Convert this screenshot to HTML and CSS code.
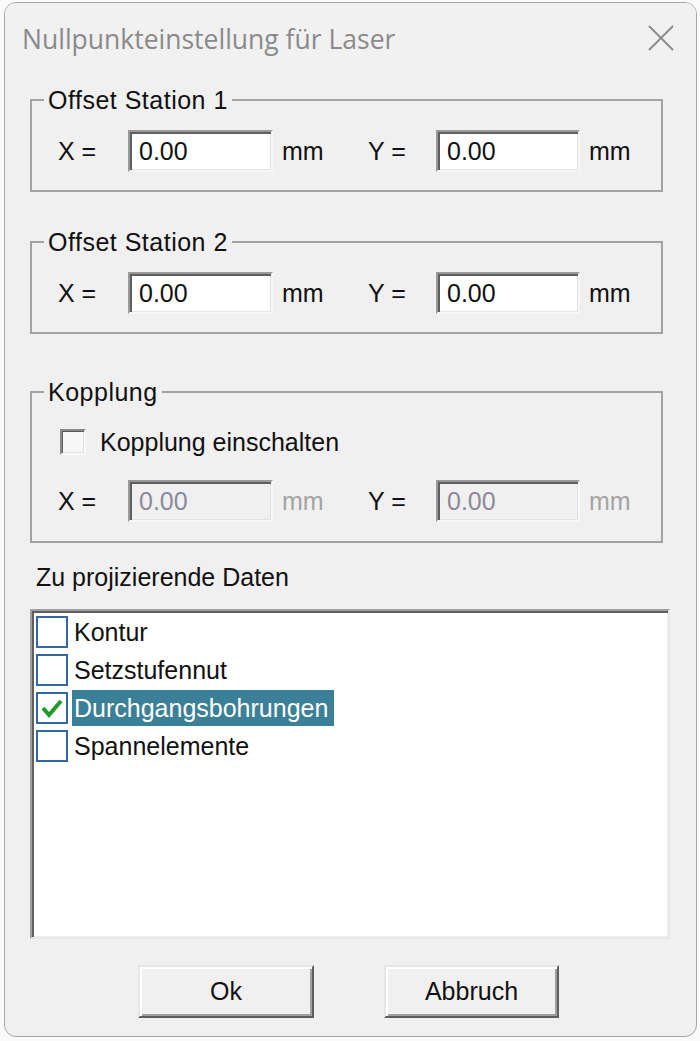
FILE: index.html
```html
<!DOCTYPE html>
<html lang="de">
<head>
<meta charset="utf-8">
<title>Nullpunkteinstellung für Laser</title>
<link rel="stylesheet" href="styles.css">
</head>
<body>
<div class="window">
  <div class="titlebar">
    <span class="title">Nullpunkteinstellung für Laser</span>
    <svg class="close" width="26" height="26" viewBox="0 0 26 26"><path d="M1 1 L25 25 M25 1 L1 25" stroke="#8a8a8a" stroke-width="1.8" fill="none"/></svg>
  </div>

  <fieldset class="group g1">
    <legend>Offset Station 1</legend>
    <div class="row">
      <span class="lbl">X =</span><div class="edit">0.00</div><span class="unit">mm</span>
      <span class="lbl lbl-y">Y =</span><div class="edit edit-y">0.00</div><span class="unit">mm</span>
    </div>
  </fieldset>

  <fieldset class="group g2">
    <legend>Offset Station 2</legend>
    <div class="row">
      <span class="lbl">X =</span><div class="edit">0.00</div><span class="unit">mm</span>
      <span class="lbl lbl-y">Y =</span><div class="edit edit-y">0.00</div><span class="unit">mm</span>
    </div>
  </fieldset>

  <fieldset class="group g3">
    <legend>Kopplung</legend>
    <div class="checkrow">
      <span class="check3d"></span><span class="checklbl">Kopplung einschalten</span>
    </div>
    <div class="row row-dis">
      <span class="lbl">X =</span><div class="edit disabled">0.00</div><span class="unit unit-dis">mm</span>
      <span class="lbl lbl-y">Y =</span><div class="edit edit-y disabled">0.00</div><span class="unit unit-dis">mm</span>
    </div>
  </fieldset>

  <div class="listcaption">Zu projizierende Daten</div>

  <div class="listbox">
    <div class="item"><span class="cb"></span><span class="itext">Kontur</span></div>
    <div class="item"><span class="cb"></span><span class="itext">Setzstufennut</span></div>
    <div class="item"><span class="cb"><svg width="28" height="28" viewBox="0 0 28 28"><path d="M5 14 L11 21 L23 7" stroke="#1f9b2a" stroke-width="4" fill="none"/></svg></span><span class="itext sel">Durchgangsbohrungen</span></div>
    <div class="item"><span class="cb"></span><span class="itext">Spannelemente</span></div>
  </div>

  <div class="buttons">
    <div class="btn btn-ok">Ok</div>
    <div class="btn btn-cancel">Abbruch</div>
  </div>
</div>
</body>
</html>
```

FILE: styles.css
```css
html, body {
  margin: 0;
  padding: 0;
}
body {
  width: 700px;
  height: 1041px;
  background: #fafafa;
  overflow: hidden;
  font-family: "Liberation Sans", Arial, sans-serif;
  font-size: 25px;
  color: #111;
}
.window {
  margin: 2px 3px 0 4px;
  height: 1035px;
  box-sizing: border-box;
  border: 1px solid #a8a8a8;
  border-radius: 12px;
  background: #f0f0f0;
  display: flex;
  flex-direction: column;
  overflow: hidden;
}
.titlebar {
  height: 72px;
  flex: none;
  display: flex;
  align-items: center;
  justify-content: space-between;
  padding: 0 22px 0 17px;
  background: #f1f1f1;
}
.title {
  font-family: "Open Sans", "Noto Sans", sans-serif;
  font-size: 26.5px;
  color: #8a8a8a;
}
.close {
  display: block;
  margin-top: -2px;
}

.group {
  margin: 0 33px 0 25px;
  padding: 0;
  border: 2px solid #a3a3a3;
  min-width: 0;
}
.group legend {
  margin-left: 12px;
  padding: 0 4px;
  line-height: 28px;
  color: #111;
  letter-spacing: 0.5px;
}
.g1 { margin-top: 11px; padding: 16px 0 18px 0; }
.g2 { margin-top: 36px; padding: 16px 0 18px 0; }
.g3 { margin-top: 44px; padding: 18px 0 19px 0; }

.row {
  display: flex;
  align-items: center;
  padding-left: 26px;
}
.lbl {
  width: 70px;
  flex: none;
}
.lbl-y { width: 68px; }
.edit {
  width: 145px;
  height: 42px;
  flex: none;
  box-sizing: border-box;
  background: #fff;
  border-style: solid;
  border-width: 2px;
  border-color: #9a9a9a #f6f6f6 #f6f6f6 #9a9a9a;
  box-shadow: inset 2px 2px 0 #5f5f5f, inset -1px -1px 0 #e3e3e3;
  padding-left: 9px;
  line-height: 38px;
  color: #111;
}
.edit-y { width: 144px; }
.edit.disabled {
  background: #f0f0f0;
  color: #8e8a98;
}
.unit {
  width: 86px;
  padding-left: 9px;
  flex: none;
}
.unit-dis { color: #a4a4a4; }

.checkrow {
  display: flex;
  align-items: center;
  height: 36px;
  padding-left: 28px;
  margin-bottom: 20px;
}
.check3d {
  width: 26px;
  height: 26px;
  box-sizing: border-box;
  background: #f7f7f7;
  border-style: solid;
  border-width: 2px;
  border-color: #8a8a8a #f8f8f8 #f8f8f8 #8a8a8a;
  box-shadow: inset 1px 1px 0 #5a5a5a, inset -1px -1px 0 #e3e3e3;
}
.checklbl {
  margin-left: 14px;
}

.listcaption {
  margin: 20px 0 0 31px;
  line-height: 28px;
}

.listbox {
  margin: 18px 0 0 25px;
  width: 640px;
  height: 330px;
  flex: none;
  box-sizing: border-box;
  background: #fff;
  border-style: solid;
  border-width: 2px;
  border-color: #a0a0a0 #e8e8e8 #e8e8e8 #a0a0a0;
  box-shadow: inset 2px 2px 0 #5f5f5f, inset -1px -1px 0 #f0f0f0;
  padding: 2px 2px 0 2px;
}
.item {
  height: 38px;
  display: flex;
  align-items: center;
  padding-left: 2px;
}
.cb {
  width: 32px;
  height: 32px;
  box-sizing: border-box;
  border: 2px solid #3567a4;
  background: #fff;
  display: flex;
  align-items: center;
  justify-content: center;
  flex: none;
}
.cb svg { display: block; }
.itext {
  margin-left: 4px;
  padding: 0 2px;
  line-height: 36px;
  color: #111;
}
.itext.sel {
  background: #3b8096;
  color: #fff;
  padding-right: 6px;
}

.buttons {
  display: flex;
  gap: 70px;
  margin-top: 26px;
  padding-left: 133px;
}
.btn {
  height: 53px;
  box-sizing: border-box;
  border-style: solid;
  border-width: 2px;
  border-color: #e6e6e6 #5e5e5e #5e5e5e #e6e6e6;
  box-shadow: inset 2px 2px 0 #fff, inset -2px -2px 0 #a0a0a0;
  background: #f0f0f0;
  display: flex;
  align-items: center;
  justify-content: center;
  color: #111;
}
.btn-ok { width: 176px; }
.btn-cancel { width: 175px; }
```
